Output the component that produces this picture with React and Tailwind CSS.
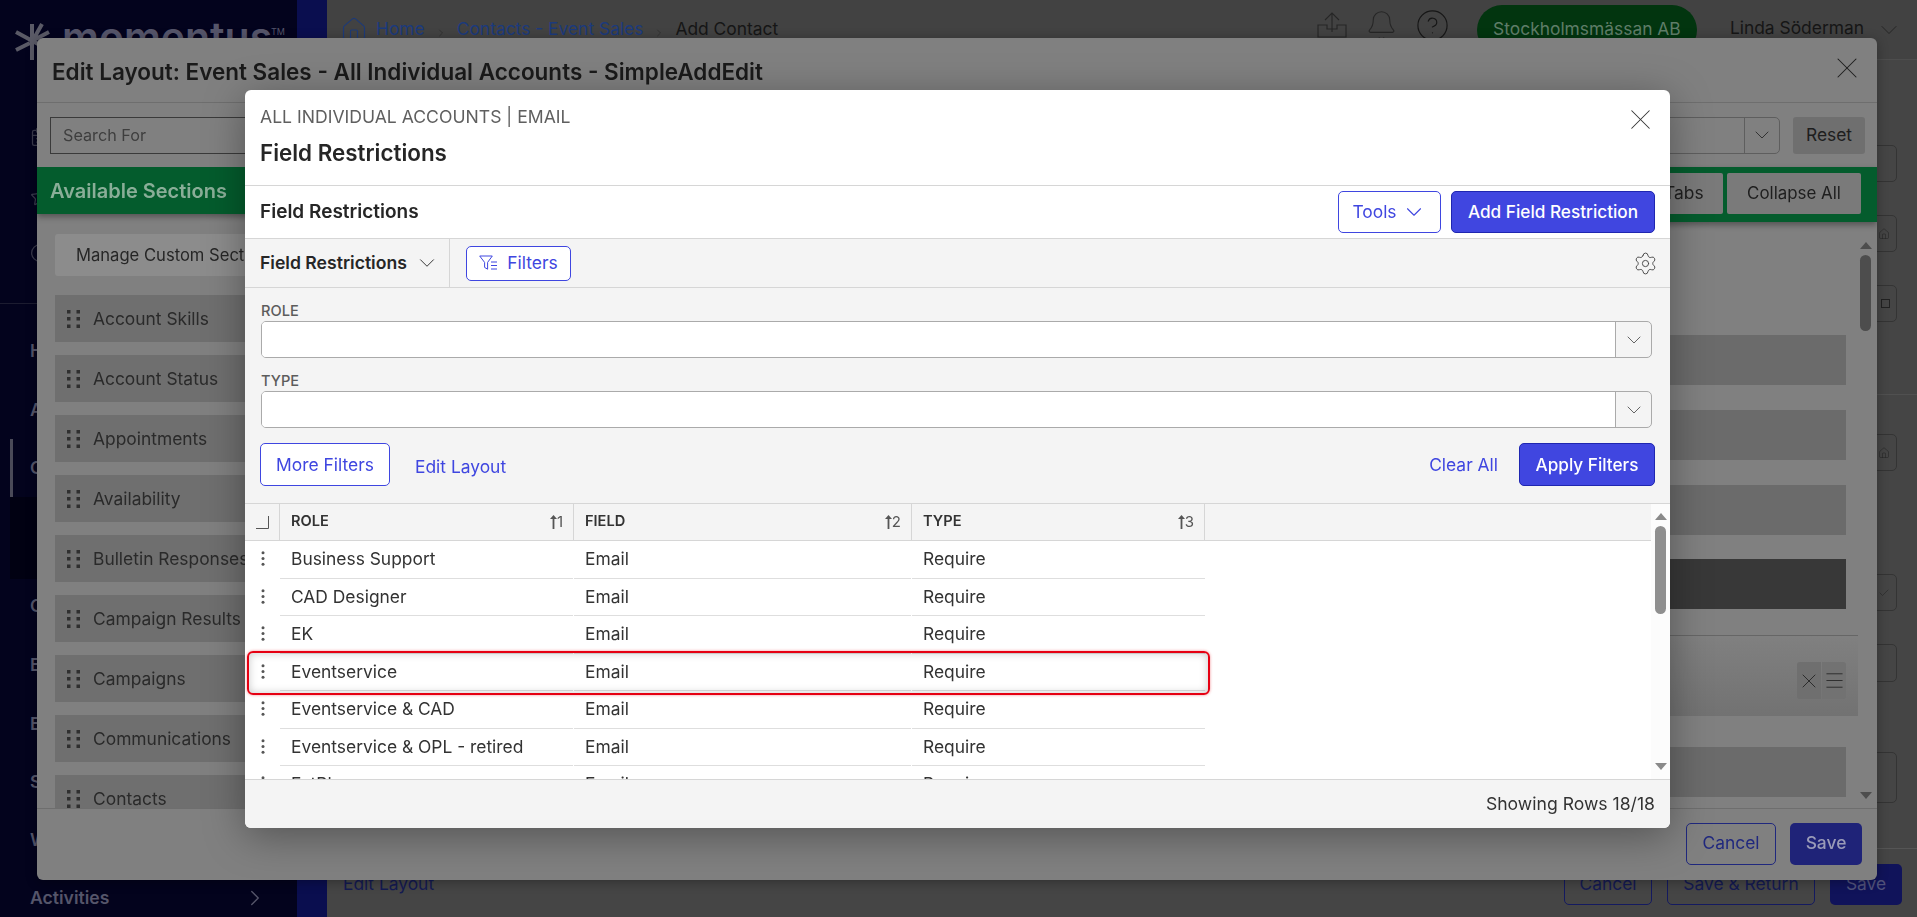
import React from "react";
import { Bell, CalendarDays, Check, ChevronDown, ChevronRight, CircleHelp, Clock, House, Menu, Settings, Star, X } from "lucide-react";

const sections = ["Account Skills", "Account Status", "Appointments", "Availability", "Bulletin Responses", "Campaign Results", "Campaigns", "Communications", "Contacts"];

const roles = ["Business Support", "CAD Designer", "EK", "Eventservice", "Eventservice & CAD", "Eventservice & OPL - retired", "FatPlan"];

const navLetters = [
  { label: "H", top: "mt-[35px]" },
  { label: "A", top: "mt-[35px]" },
  { label: "C", top: "mt-[34px]", active: true },
  { label: "C", top: "mt-[114px]" },
  { label: "E", top: "mt-[35px]" },
  { label: "E", top: "mt-[35px]" },
  { label: "S", top: "mt-[34px]" },
  { label: "W", top: "mt-[34px]" },
];

const DragDots = () => (
  <svg width="13" height="18" viewBox="0 0 13 18" className="shrink-0 fill-[#2f2f2f]">
    <rect x="0" y="0" width="3.5" height="3.5" /><rect x="9.5" y="0" width="3.5" height="3.5" />
    <rect x="0" y="7" width="3.5" height="3.5" /><rect x="9.5" y="7" width="3.5" height="3.5" />
    <rect x="0" y="14.5" width="3.5" height="3.5" /><rect x="9.5" y="14.5" width="3.5" height="3.5" />
  </svg>
);

const Kebab = () => (
  <svg width="4" height="15" viewBox="0 0 4 15" className="fill-[#555]">
    <circle cx="2" cy="1.7" r="1.5" /><circle cx="2" cy="7.5" r="1.5" /><circle cx="2" cy="13.3" r="1.5" />
  </svg>
);

const SortMark = ({ n }) => (
  <span className="flex items-center text-[15px] font-normal text-[#555]">
    <svg width="7" height="14" viewBox="0 0 7 14" className="fill-[#555]"><path d="M3.5 0 7 4H4.4v10H2.6V4H0z" /></svg>
    {n}
  </span>
);

const FilterIcon = () => (
  <svg width="19" height="16" viewBox="0 0 19 16" fill="none" stroke="#3f46e0" strokeWidth="1">
    <path d="M.7 1h12.6L8.6 7.4v6.8l-3-1.8V7.4z" />
    <path d="M12 7h6M12 10.5h6M12 14h6" />
  </svg>
);

const UploadTray = () => (
  <svg width="30" height="26" viewBox="0 0 30 26" fill="none" stroke="#262626" strokeWidth="1.1" className="mb-[9px]">
    <path d="M15 20V1M8 8l7-7 7 7" />
    <path d="M10 13H1v12h28V13h-9v4H10z" />
  </svg>
);

const SelectBox = ({ label }) => (
  <div className="flex flex-col">
    <span className="text-[14.6px] leading-[16px] font-medium text-[#5c5c5c] mb-[2px]">{label}</span>
    <div className="flex h-[37px] w-[1391px] rounded-[5px] border border-[#aaaaaa] overflow-hidden">
      <div className="flex-1 bg-white border-r border-[#aaaaaa]"></div>
      <div className="w-[35px] flex items-center justify-center">
        <ChevronDown size={24} strokeWidth={0.9} color="#555" />
      </div>
    </div>
  </div>
);

const Sidebar = () => (
  <aside className="w-[297px] shrink-0 bg-[#03031d] flex flex-col text-[#55556a]">
    <div className="h-[66px] shrink-0 relative flex items-start pl-[12px] pt-[22px]">
      <svg width="41" height="40" viewBox="0 0 41 40" stroke="#5a5a66" strokeWidth="4" fill="none">
        <path d="M20 2v36M4 10l33 18M4 28l14-7M37 10l-17 9M30 2l-10 18" />
      </svg>
      <span className="absolute left-[62px] top-[9px] text-[41px] leading-[56px] font-semibold">momentus</span>
      <span className="absolute left-[271px] top-[27px] text-[9px] leading-[10px]">TM</span>
    </div>
    <div className="pl-[30px] flex flex-col text-[#3a3a4c]">
      <CalendarDays size={20} strokeWidth={1.5} className="mt-[61px]" />
      <Star size={20} strokeWidth={1.5} className="mt-[40px]" />
      <Clock size={20} strokeWidth={1.5} className="mt-[36px]" />
    </div>
    <div className="mt-[40px] h-px shrink-0 bg-[#1c1c30]"></div>
    {navLetters.map((item, i) => (
      <div key={i} className={`${item.top} h-[24px] shrink-0 pl-[30px] text-[17.6px] leading-[24px] font-semibold relative ${item.active ? "before:absolute before:left-[10px] before:top-[-17px] before:h-[58px] before:w-[3px] before:bg-[#4a4a58] after:absolute after:left-[10px] after:top-[41px] after:h-[82px] after:right-0 after:bg-[#010112]" : ""}`}>
        {item.label}
      </div>
    ))}
    <div className="mt-auto h-[38px] pl-[30px] pr-[29px] flex items-center justify-between text-[17.6px] font-semibold">
      Activities
      <ChevronRight size={26} strokeWidth={1.25} />
    </div>
  </aside>
);

const PageHeader = () => (
  <header className="h-[60px] shrink-0 bg-[#424242] border-b border-[#4d4d4d] flex items-center pl-[13px] pr-[14px] text-[17.4px]">
    <House size={28} strokeWidth={1} color="#1d3a78" className="mr-[8px]" />
    <span className="text-[#1c3a7c]">Home</span>
    <ChevronRight size={12} strokeWidth={1} color="#222" className="mx-[10px] mt-[6px]" />
    <span className="text-[#1c3a7c]">Contacts - Event Sales</span>
    <ChevronRight size={12} strokeWidth={1} color="#222" className="mx-[10px] mt-[6px]" />
    <span className="text-[#161616]">Add Contact</span>
    <div className="ml-auto flex items-center">
      <UploadTray />
      <Bell size={33} strokeWidth={0.8} color="#262626" className="ml-[18px] mb-[9px]" />
      <CircleHelp size={35} strokeWidth={0.8} color="#161616" className="ml-[17px] mb-[9px]" />
      <span className="ml-[27px] w-[220px] h-[50px] rounded-full bg-[#02350f] text-[#5f7d68] flex items-center justify-center">Stockholmsmässan AB</span>
      <span className="ml-[33px] mb-[2px] text-[#161616]">Linda Söderman</span>
      <ChevronDown size={28} strokeWidth={0.8} color="#222" className="ml-[11px]" />
    </div>
  </header>
);

const PageSideBoxes = () => {
  const boxes = [
    { top: "mt-[85px]", h: "h-[37px]" },
    { top: "mt-[33px]", h: "h-[37px]", icon: <House size={12} strokeWidth={1} color="#222" /> },
    { top: "mt-[33px]", h: "h-[37px]", icon: <span className="block w-[9px] h-[9px] border border-[#222]"></span> },
    { line: true },
    { top: "mt-[39px]", h: "h-[37px]", icon: <House size={12} strokeWidth={1} color="#222" /> },
    { top: "mt-[103px]", h: "h-[37px]", icon: <Check size={12} strokeWidth={1} color="#222" /> },
    { top: "mt-[33px]", h: "h-[38px]" },
    { top: "mt-[70px]", h: "h-[51px]" },
  ];
  return (
    <div className="flex-1 flex flex-col items-end pr-[20px]">
      {boxes.map((box, i) => box.line ? (
        <div key={i} className="mt-[72px] h-px self-stretch -mr-[20px] bg-[#505050]"></div>
      ) : (
        <div key={i} className={`${box.top} ${box.h} w-[40px] border border-[#343434] rounded-[5px] flex items-center justify-end pr-[6px]`}>
          {box.icon}
        </div>
      ))}
    </div>
  );
};

const PageFooter = () => (
  <footer className="h-[69px] shrink-0 border-t border-[#555] flex items-center pl-[16px] pr-[15px] pt-[3px] text-[17.4px]">
    <span className="text-[#141a52]">Edit Layout</span>
    <div className="ml-auto flex gap-[15px]">
      <span className="w-[88px] h-[41px] rounded-[5px] border border-[#141a60] text-[#141a52] flex items-center justify-center">Cancel</span>
      <span className="w-[148px] h-[41px] rounded-[5px] border border-[#141a60] text-[#141a52] flex items-center justify-center">Save &amp; Return</span>
      <span className="w-[72px] h-[41px] rounded-[5px] bg-[#10135a] text-[#50527a] flex items-center justify-center">Save</span>
    </div>
  </footer>
);

const EditLayoutModal = () => (
  <div className="fixed left-[37px] top-[38px] w-[1840px] h-[842px] bg-[#808080] rounded-[6px] flex flex-col overflow-hidden text-[#1e1e1e] shadow-[0_2px_12px_rgba(0,0,0,0.3)]">
    <div className="h-[65px] shrink-0 border-b border-[#6e6e6e] flex items-center pl-[15px] pr-[12px]">
      <h1 className="pt-[3px] text-[22.5px] font-semibold text-[#1a1a1a]">Edit Layout: Event Sales - All Individual Accounts - SimpleAddEdit</h1>
      <X size={36} strokeWidth={0.7} color="#1c1c1c" className="ml-auto mb-[4px]" />
    </div>
    <div className="h-[64px] shrink-0 flex items-center pl-[13px] pr-[12px]">
      <div className="w-[400px] h-[37px] border border-[#3a3a3a] flex items-center pl-[12px] text-[16.2px] text-[#3e3e3e]">Search For</div>
      <div className="ml-auto flex h-[37px] w-[400px] rounded-[5px] border border-[#5e5e5e] overflow-hidden">
        <div className="flex-1 border-r border-[#5e5e5e]"></div>
        <div className="w-[34px] flex items-center justify-center"><ChevronDown size={24} strokeWidth={0.9} color="#2a2a2a" /></div>
      </div>
      <span className="ml-[13px] w-[72px] h-[37px] rounded-[3px] bg-[#6f6f6f] flex items-center justify-center text-[17.4px]">Reset</span>
    </div>
    <div className="flex-1 flex min-h-0">
      <div className="w-[400px] flex flex-col overflow-hidden">
        <div className="h-[47px] shrink-0 bg-[#045c2d] flex items-center pl-[13px] text-[20px] font-semibold text-[#8aae98] shadow-[0_3px_6px_rgba(0,0,0,0.35)]">Available Sections</div>
        <div className="mx-[18px] mt-[20px] h-[42px] shrink-0 bg-[#8c8c8c] rounded-[3px] flex items-center pl-[21px] text-[16.6px] text-[#262626]">Manage Custom Sections</div>
        <div className="mt-[19px] flex flex-col gap-[13px]">
          {sections.map((name) => (
            <div key={name} className="mx-[18px] h-[47px] shrink-0 bg-[#6f6f6f] flex items-center pl-[12px] gap-[13px] text-[17.4px] text-[#2a2a2a]">
              <DragDots />
              <span className="whitespace-nowrap pt-[2px]">{name}</span>
            </div>
          ))}
        </div>
      </div>
      <div className="flex-1 flex flex-col min-w-0 relative">
        <div className="h-[55px] shrink-0 bg-[#045c2d] flex items-start pt-[6px] justify-end pr-[16px] gap-[4px] shadow-[0_3px_6px_rgba(0,0,0,0.35)]">
          <span className="w-[170px] h-[41px] rounded-[2px] bg-[#7a7a7a] flex items-center justify-center text-[17.4px]">Expand All Tabs</span>
          <span className="w-[134px] h-[41px] rounded-[2px] bg-[#7a7a7a] flex items-center justify-center text-[16.9px]">Collapse All</span>
        </div>
        <div className="flex-1 flex min-h-0">
          <div className="flex-1 min-w-0 flex flex-col overflow-hidden">
            <div className="mt-[113px] mr-[12px] h-[50px] shrink-0 bg-[#6b6b6b]"></div>
            <div className="mt-[25px] mr-[12px] h-[50px] shrink-0 bg-[#6b6b6b]"></div>
            <div className="mt-[25px] mr-[12px] h-[50px] shrink-0 bg-[#6b6b6b]"></div>
            <div className="mt-[24px] mr-[12px] h-[50px] shrink-0 bg-[#383838]"></div>
            <div className="mt-[26px] h-px shrink-0 bg-[#666]"></div>
            <div className="h-[80px] shrink-0 bg-gradient-to-b from-[#808080] to-[#727272] flex items-center justify-end pr-[12px] pt-[9px]">
              <span className="w-[24px] h-[37px] rounded-l-[3px] bg-[#6f6f6f] flex items-center justify-center"><X size={24} strokeWidth={0.8} color="#1c1c1c" /></span>
              <span className="w-[24px] h-[37px] rounded-r-[3px] bg-[#727272] flex items-center justify-center ml-px"><Menu size={23} strokeWidth={0.8} color="#1c1c1c" /></span>
            </div>
            <div className="mt-[31px] mr-[12px] h-[50px] shrink-0 bg-[#6b6b6b]"></div>
          </div>
          <div className="w-[15px] shrink-0 mr-[4px] relative flex flex-col items-center">
            <span className="mt-[20px] w-0 h-0 border-x-[6px] border-x-transparent border-b-[7px] border-b-[#4d4d4d]"></span>
            <span className="mt-[6px] w-[11px] h-[76px] rounded-full bg-[#4d4d4d]"></span>
            <span className="mt-auto mb-[9px] w-0 h-0 border-x-[6px] border-x-transparent border-t-[7px] border-t-[#4d4d4d]"></span>
          </div>
        </div>
      </div>
    </div>
    <div className="h-[72px] shrink-0 border-t border-[#6e6e6e] flex items-center justify-end gap-[14px] pr-[15px] pb-[2px] text-[17.4px]">
      <span className="w-[90px] h-[42px] rounded-[5px] border border-[#20287e] text-[#20287e] flex items-center justify-center">Cancel</span>
      <span className="w-[72px] h-[42px] rounded-[5px] bg-[#1f2378] text-[#9a9bb8] font-medium flex items-center justify-center">Save</span>
    </div>
  </div>
);

const Row = ({ role }) => (
  <div className="grid grid-cols-[35px_294px_338px_293px] h-[37.5px] text-[17.4px] text-[#333] shrink-0">
    <div className="flex items-center justify-center pb-[2px]"><Kebab /></div>
    <div className="flex items-center pl-[11px] mr-px border-b border-[#dedede]">{role}</div>
    <div className="flex items-center pl-[11px] mr-px border-b border-[#dedede]">Email</div>
    <div className="flex items-center pl-[11px] border-b border-[#dedede]">Require</div>
  </div>
);

const FieldRestrictionsModal = () => (
  <div className="fixed left-[245px] top-[90px] w-[1425px] h-[738px] bg-white rounded-[6px] flex flex-col overflow-hidden text-[#262626] shadow-[0_8px_40px_rgba(0,0,0,0.35)]">
    <div className="h-[96px] shrink-0 border-b border-[#d6d6d6] px-[15px] pt-[15px] relative">
      <p className="text-[17.6px] leading-[24px] text-[#5f5f5f]">ALL INDIVIDUAL ACCOUNTS | EMAIL</p>
      <h2 className="mt-[11px] text-[22.4px] leading-[26px] font-semibold text-[#262626]">Field Restrictions</h2>
      <X size={35} strokeWidth={0.7} color="#333" className="absolute right-[12px] top-[12px]" />
    </div>
    <div className="h-[53px] shrink-0 border-b border-[#d6d6d6] flex items-center pl-[15px] pr-[15px]">
      <h3 className="text-[19px] font-semibold">Field Restrictions</h3>
      <button className="ml-auto w-[103px] h-[42px] rounded-[5px] border border-[#3f46e0] text-[#3f46e0] text-[17.4px] flex items-center justify-center gap-[4px]">
        Tools <ChevronDown size={26} strokeWidth={1} />
      </button>
      <button className="ml-[10px] w-[204px] h-[42px] rounded-[5px] bg-[#4046e0] border border-[#1f26b0] text-white text-[17.2px] font-medium">Add Field Restriction</button>
    </div>
    <div className="h-[264px] shrink-0 bg-[#f4f4f4] flex flex-col">
      <div className="h-[49px] shrink-0 border-b border-[#d6d6d6] flex items-center">
        <div className="w-[205px] h-full border-r border-[#d6d6d6] flex items-center pl-[15px] gap-[7px]">
          <span className="text-[17.6px] font-semibold whitespace-nowrap">Field Restrictions</span>
          <ChevronDown size={26} strokeWidth={0.9} color="#333" />
        </div>
        <button className="ml-[16px] w-[105px] h-[35px] rounded-[5px] border border-[#3f46e0] bg-white text-[#3f46e0] text-[17.4px] flex items-center justify-center gap-[9px]">
          <FilterIcon /> Filters
        </button>
        <Settings size={25} strokeWidth={0.9} color="#444" className="ml-auto mr-[12px]" />
      </div>
      <div className="pl-[16px] pt-[15px] flex flex-col gap-[15px]">
        <SelectBox label="ROLE" />
        <SelectBox label="TYPE" />
      </div>
      <div className="mt-[15px] flex items-center pl-[15px] pr-[15px]">
        <button className="w-[130px] h-[43px] pt-[1px] rounded-[5px] border border-[#3f46e0] bg-white text-[#3f46e0] text-[17.4px]">More Filters</button>
        <span className="ml-[25px] mt-[5px] text-[17.4px] text-[#3f46e0]">Edit Layout</span>
        <span className="ml-auto mt-[1px] text-[17.4px] text-[#3f46e0]">Clear All</span>
        <button className="ml-[21px] w-[136px] h-[43px] pt-[1px] rounded-[5px] bg-[#4046e0] border border-[#1f26b0] text-white text-[17.2px] font-medium">Apply Filters</button>
      </div>
    </div>
    <div className="flex-1 min-h-0 flex border-t border-[#d6d6d6] relative">
      <div className="flex-1 min-w-0 flex flex-col">
        <div className="h-[37px] shrink-0 bg-[#f4f4f4] border-b border-[#d6d6d6] grid grid-cols-[35px_294px_338px_293px] text-[14.6px] font-semibold text-[#333]">
          <div className="border-r border-[#d6d6d6] flex items-center justify-center">
            <svg width="13" height="13" viewBox="0 0 13 13" fill="none" stroke="#555"><path d="M0 12.5h12.5V0" /></svg>
          </div>
          <div className="border-r border-[#d6d6d6] flex items-center justify-between pl-[11px] pr-[10px]">ROLE <SortMark n="1" /></div>
          <div className="border-r border-[#d6d6d6] flex items-center justify-between pl-[11px] pr-[10px]">FIELD <SortMark n="2" /></div>
          <div className="border-r border-[#d6d6d6] flex items-center justify-between pl-[11px] pr-[10px]">TYPE <SortMark n="3" /></div>
        </div>
        <div className="flex-1 min-h-0 overflow-hidden flex flex-col">
          {roles.map((role) => <Row key={role} role={role} />)}
        </div>
      </div>
      <div className="w-[19px] shrink-0 bg-[#fcfcfc] flex flex-col items-center">
        <span className="mt-[9px] w-0 h-0 border-x-[6px] border-x-transparent border-b-[7px] border-b-[#8a8a8a]"></span>
        <span className="mt-[6px] w-[11px] h-[88px] rounded-full bg-[#8f8f8f]"></span>
        <span className="mt-auto mb-[9px] w-0 h-0 border-x-[6px] border-x-transparent border-t-[7px] border-t-[#8a8a8a]"></span>
      </div>
    </div>
    <div className="h-[49px] shrink-0 bg-[#f4f4f4] border-t border-[#d6d6d6] flex items-center justify-end pr-[15px] pt-[1px] text-[17.6px] text-[#333]">Showing Rows 18/18</div>
    {/* red callout drawn over the Eventservice row */}
    <div className="absolute left-[2px] top-[561px] w-[963px] h-[44px] rounded-[6px] border-2 border-[#e60012] shadow-[0_0_3px_rgba(230,0,18,0.45),inset_0_0_8px_rgba(0,0,0,0.22)]"></div>
  </div>
);

const App = () => {
  return (
    <div className="relative h-[917px] w-[1917px] overflow-hidden flex bg-[#454545] [font-family:Inter,sans-serif]">
      <Sidebar />
      <div className="w-[30px] shrink-0 bg-[#0a0e4f]"></div>
      <main className="flex-1 min-w-0 flex flex-col">
        <PageHeader />
        <PageSideBoxes />
        <PageFooter />
      </main>
      <EditLayoutModal />
      <FieldRestrictionsModal />
    </div>
  );
};

export default App;
